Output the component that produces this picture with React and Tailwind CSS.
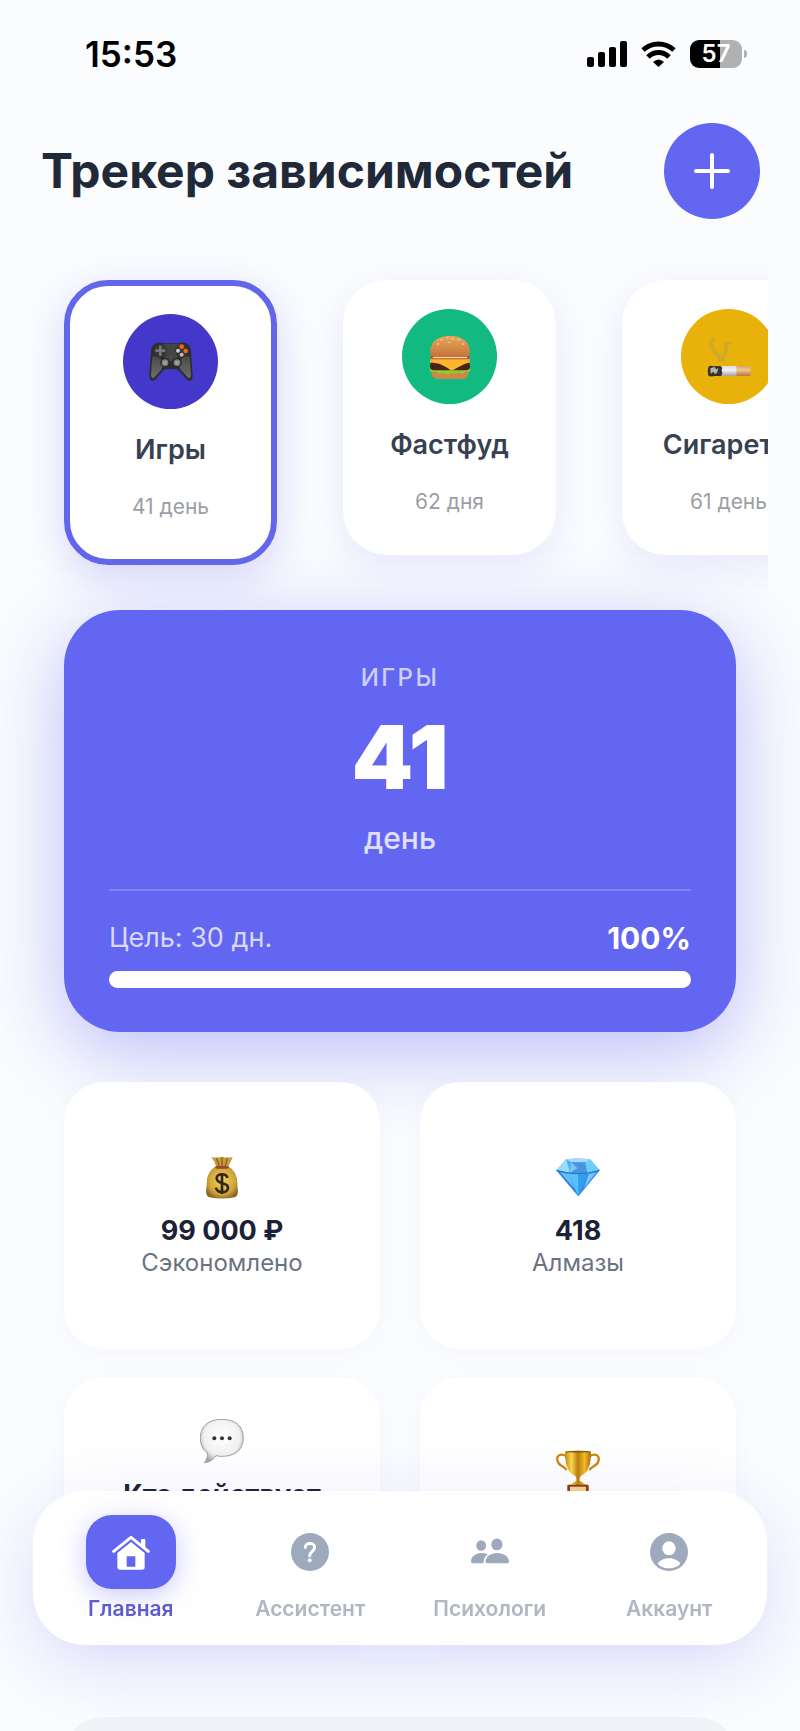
import React from 'react';

const GamepadEmoji = () => (
    <svg viewBox="0 0 132 132" className="h-11 w-11" aria-hidden="true">
        <defs>
            <linearGradient id="padBody" x1="0" y1="0" x2="0" y2="1">
                <stop offset="0" stopColor="#4a4b48" />
                <stop offset="1" stopColor="#6b6e70" />
            </linearGradient>
        </defs>
        <path d="M20 10Q34 5 40 10H92Q98 5 112 10Q124 14 126 34L131 104Q132 122 121 122Q114 122 106 110L90 92Q86 88 80 88H52Q46 88 42 92L26 110Q18 122 11 122Q0 122 1 104L6 34Q8 14 20 10Z" fill="#2d2e2c" />
        <path d="M10 50Q22 44 40 62Q44 84 34 92L16 112Q8 120 6 106Z" fill="url(#padBody)" />
        <path d="M122 50Q110 44 92 62Q88 84 98 92L116 112Q124 120 126 106Z" fill="url(#padBody)" />
        <path d="M42 12H90L84 64H48Z" fill="#454644" />
        <circle cx="34" cy="32" r="20" fill="#353634" />
        <circle cx="98" cy="32" r="20" fill="#353634" />
        <path d="M30 17H38V28H49V36H38V47H30V36H19V28H30Z" fill="#777979" />
        <circle cx="98" cy="20" r="7" fill="#f4641e" />
        <circle cx="110" cy="33" r="7" fill="#f4641e" />
        <circle cx="87" cy="32" r="6" fill="#c9cbcd" />
        <circle cx="98" cy="44" r="6" fill="#b8babc" />
        <circle cx="66" cy="51" r="3" fill="#8f3b22" />
        <circle cx="48" cy="68" r="14" fill="#252624" />
        <circle cx="84" cy="68" r="14" fill="#252624" />
        <circle cx="48" cy="68" r="10" fill="#7d8082" />
        <circle cx="84" cy="68" r="10" fill="#7d8082" />
        <circle cx="48" cy="68" r="6" fill="#9c9fa1" />
        <circle cx="84" cy="68" r="6" fill="#9c9fa1" />
    </svg>
);

const BurgerEmoji = () => (
    <svg viewBox="0 0 132 132" className="h-11 w-11" aria-hidden="true">
        <defs>
            <linearGradient id="bun" x1="0" y1="0" x2="0" y2="1">
                <stop offset="0" stopColor="#eba85c" />
                <stop offset="1" stopColor="#c4733a" />
            </linearGradient>
        </defs>
        <path d="M10 108Q8 132 34 132H98Q124 132 122 108Z" fill="#cf8646" />
        <path d="M4 104Q8 96 20 98H112Q126 96 128 106Q122 116 112 110Q104 120 92 112Q82 120 70 114Q58 122 46 113Q34 120 24 111Q10 114 4 104Z" fill="#93c92f" />
        <rect x="6" y="80" width="120" height="26" rx="12" fill="#4c2415" />
        <path d="M8 72H124L126 82Q108 86 96 94L74 106Q66 106 58 98L34 86L6 82Z" fill="#fbb62c" />
        <rect x="8" y="60" width="116" height="13" rx="6" fill="#d33a22" />
        <path d="M14 68H118" stroke="#f2dfb5" strokeWidth="4" />
        <path d="M6 52Q8 4 66 2Q124 4 126 52Q126 66 108 66H24Q6 66 6 52Z" fill="url(#bun)" />
        <g fill="#f7dca6">
            <ellipse cx="40" cy="15" rx="3" ry="2" />
            <ellipse cx="58" cy="8" rx="3" ry="2" />
            <ellipse cx="74" cy="12" rx="3" ry="2" />
            <ellipse cx="92" cy="14" rx="3" ry="2" />
            <ellipse cx="30" cy="27" rx="3" ry="2" />
            <ellipse cx="106" cy="27" rx="3" ry="2" />
            <ellipse cx="64" cy="22" rx="3" ry="2" />
        </g>
    </svg>
);

const CigaretteEmoji = () => (
    <svg viewBox="0 0 132 132" className="h-11 w-11" aria-hidden="true">
        <defs>
            <linearGradient id="cigPaper" x1="0" y1="0" x2="0" y2="1">
                <stop offset="0" stopColor="#d9dbe2" />
                <stop offset="0.4" stopColor="#f3f3f5" />
                <stop offset="1" stopColor="#a3a2a6" />
            </linearGradient>
            <linearGradient id="cigFilter" x1="0" y1="0" x2="0" y2="1">
                <stop offset="0" stopColor="#dba368" />
                <stop offset="0.4" stopColor="#efc795" />
                <stop offset="1" stopColor="#b17441" />
            </linearGradient>
        </defs>
        <g fill="none" stroke="#c9a637" strokeLinecap="round" opacity="0.8">
            <path d="M38 76C42 60 20 54 14 34C10 22 16 20 18 12" strokeWidth="11" />
            <path d="M48 76C44 58 66 54 56 36C52 26 62 28 68 24" strokeWidth="10" />
        </g>
        <rect x="34" y="93" width="60" height="30" fill="url(#cigPaper)" />
        <path d="M88 93H126Q131 93 131 98V118Q131 123 126 123H88Z" fill="url(#cigFilter)" />
        <path d="M4 96Q10 90 20 94L40 93Q48 96 44 106Q48 118 42 123H22Q12 126 4 122Q0 108 4 96Z" fill="#36322d" />
        <path d="M10 100L22 96L28 103L34 99L31 112L24 118L20 110L11 116Z" fill="#b6b3aa" />
    </svg>
);

const MoneyEmoji = () => (
    <svg viewBox="0 0 132 132" className="h-11 w-11" aria-hidden="true">
        <defs>
            <radialGradient id="sack" cx="0.5" cy="0.45" r="0.6">
                <stop offset="0" stopColor="#f4d65b" />
                <stop offset="0.7" stopColor="#cfa437" />
                <stop offset="1" stopColor="#8a6224" />
            </radialGradient>
        </defs>
        <path d="M34 6Q48 10 66 5Q84 10 98 5Q96 14 82 38H50Q46 22 34 6Z" fill="#c79a3f" />
        <path d="M50 9L58 36M66 7V36M82 9L75 36" stroke="#8a6224" strokeWidth="4" />
        <path d="M48 34H84Q114 50 112 92Q118 122 104 127Q66 134 28 127Q14 122 20 92Q18 50 48 34Z" fill="url(#sack)" />
        <rect x="46" y="33" width="40" height="8" rx="4" fill="#9b4a25" />
        <path d="M82 69C80 54 50 54 50 70C50 90 84 80 84 98C84 116 50 116 48 98M66 54V117" fill="none" stroke="#33261a" strokeWidth="8" />
    </svg>
);

const DiamondEmoji = () => (
    <svg viewBox="0 0 132 132" className="h-11 w-11" aria-hidden="true">
        <path d="M30 13Q66 8 102 13L131 46L67 124L1 46Z" fill="#47b4f5" />
        <path d="M30 13L42 52L1 46Z" fill="#9bdcfb" />
        <path d="M30 13Q66 8 102 13L90 22H46Z" fill="#a9d9f5" />
        <path d="M46 22H90L94 56H38Z" fill="#4796dd" />
        <path d="M46 22L38 56L64 40Z" fill="#7cc5f5" />
        <path d="M102 13L131 46L94 56L88 22Z" fill="#6ccdfc" />
        <path d="M1 46L38 57L67 124Z" fill="#2d7fe0" />
        <path d="M12 52L38 57L56 102Z" fill="#67bdf7" />
        <path d="M38 57H94L67 124Z" fill="#56c1fb" />
        <path d="M66 57H94L67 124Z" fill="#2f9ff0" />
        <path d="M94 57L131 46L67 124Z" fill="#3b86e0" />
        <path d="M98 58L121 52L84 98Z" fill="#6fc9fb" />
        <path d="M1 46Q66 66 131 46" fill="none" stroke="#2471c8" strokeWidth="3" />
    </svg>
);

const BubbleEmoji = () => (
    <svg viewBox="0 0 132 132" className="h-11 w-11" aria-hidden="true">
        <defs>
            <radialGradient id="bubble" cx="0.5" cy="0.42" r="0.6">
                <stop offset="0" stopColor="#ffffff" />
                <stop offset="0.7" stopColor="#f1f1f2" />
                <stop offset="1" stopColor="#a4a4a6" />
            </radialGradient>
        </defs>
        <path d="M66 1C106 1 130 22 130 56C130 92 106 112 66 112C58 112 52 111 48 110C38 124 26 130 13 131C20 122 24 112 22 101C8 92 1 76 1 56C1 22 26 1 66 1Z" fill="url(#bubble)" stroke="#a0a0a2" strokeWidth="3" />
        <circle cx="43" cy="58" r="6" fill="#333336" />
        <circle cx="66" cy="58" r="6" fill="#333336" />
        <circle cx="89" cy="58" r="6" fill="#333336" />
    </svg>
);

const TrophyEmoji = () => (
    <svg viewBox="0 0 132 132" className="h-11 w-11" aria-hidden="true">
        <defs>
            <linearGradient id="cup" x1="0" y1="0" x2="1" y2="0">
                <stop offset="0" stopColor="#c28614" />
                <stop offset="0.25" stopColor="#ffd84a" />
                <stop offset="0.5" stopColor="#b97d10" />
                <stop offset="0.75" stopColor="#f7bd1d" />
                <stop offset="1" stopColor="#a76c0a" />
            </linearGradient>
        </defs>
        <path d="M30 18C12 8 0 18 5 34C9 48 20 46 32 60M102 18C120 8 132 18 127 34C123 48 112 46 100 60" fill="none" stroke="#c8870f" strokeWidth="7" />
        <path d="M27 5Q66 0 105 5Q106 60 78 76Q70 80 71 92Q82 98 92 106H40Q50 98 61 92Q62 80 54 76Q26 60 27 5Z" fill="url(#cup)" />
        <ellipse cx="66" cy="5" rx="38" ry="3" fill="#8f5f0c" />
        <rect x="34" y="104" width="64" height="28" rx="3" fill="#8f3511" />
        <rect x="42" y="110" width="48" height="20" fill="#f4d58a" />
    </svg>
);

const HomeIcon = () => (
    <svg viewBox="0 0 114 114" className="h-[38px] w-[38px]" aria-hidden="true">
        <path d="M5 55L57 13L109 55" fill="none" stroke="currentColor" strokeWidth="9" strokeLinecap="round" strokeLinejoin="round" />
        <path d="M87 36V21Q87 18 90 18H97Q100 18 100 21V46Z" fill="currentColor" />
        <path fillRule="evenodd" d="M16 60L57 27L98 60V102Q98 110 90 110H24Q16 110 16 102ZM44 70V101H70V70Z" fill="currentColor" />
    </svg>
);

const QuestionIcon = () => (
    <svg viewBox="0 0 114 114" className="h-[38px] w-[38px]" aria-hidden="true">
        <circle cx="57" cy="57" r="57" fill="currentColor" />
        <path d="M43 43C43 28 71 28 71 43C71 54 56 56 56 68" fill="none" stroke="#fff" strokeWidth="9" strokeLinecap="round" />
        <circle cx="56" cy="82" r="6" fill="#fff" />
    </svg>
);

const PeopleIcon = () => (
    <svg viewBox="0 0 116 116" className="h-[38px] w-[38px]" fill="currentColor" aria-hidden="true">
        <ellipse cx="31" cy="38" rx="15" ry="16" />
        <ellipse cx="79" cy="35" rx="17" ry="18" />
        <path d="M44 88C44 72 60 61 80 61S116 72 116 88Q116 92 112 92H48Q44 92 44 88Z" />
        <path d="M0 88C0 72 14 61 32 61Q43 61 51 65Q38 75 38 92H4Q0 92 0 88Z" />
    </svg>
);

const AccountIcon = () => (
    <svg viewBox="0 0 114 114" className="h-[38px] w-[38px]" aria-hidden="true">
        <circle cx="57" cy="57" r="57" fill="currentColor" />
        <ellipse cx="57" cy="46" rx="20" ry="21" fill="#fff" />
        <path d="M23 92C31 80 44 76 57 76S83 80 91 92C82 102 70 106 57 106S32 102 23 92Z" fill="#fff" />
    </svg>
);

const habits = [
    { name: 'Игры', days: '41 день', color: 'bg-[#4338ca]', icon: <GamepadEmoji />, active: true },
    { name: 'Фастфуд', days: '62 дня', color: 'bg-[#12b981]', icon: <BurgerEmoji /> },
    { name: 'Сигареты', days: '61 день', color: 'bg-[#e9b20a]', icon: <CigaretteEmoji /> },
];

const tabs = [
    { name: 'Главная', icon: <HomeIcon />, active: true },
    { name: 'Ассистент', icon: <QuestionIcon /> },
    { name: 'Психологи', icon: <PeopleIcon /> },
    { name: 'Аккаунт', icon: <AccountIcon /> },
];

const StatusBar = () => (
    <div className="flex h-[107px] items-center justify-between pl-[85px] pr-[53px] text-black">
        <span className="text-[35px] font-semibold leading-10">15:53</span>
        <div className="flex items-center gap-[14px]">
            <svg viewBox="0 0 40 26" className="h-[26px] w-10" aria-hidden="true">
                <rect x="0" y="16" width="7" height="10" rx="2" />
                <rect x="11" y="11" width="7" height="15" rx="2" />
                <rect x="22" y="6" width="7" height="20" rx="2" />
                <rect x="33" y="0" width="7" height="26" rx="2" />
            </svg>
            <svg viewBox="0 0 35 26" className="h-[26px] w-[35px]" aria-hidden="true">
                <path d="M2 9C11 1 24 1 33 9" fill="none" stroke="#000" strokeWidth="5" />
                <path d="M7 16C13 10 22 10 28 16" fill="none" stroke="#000" strokeWidth="5" />
                <path d="M12 21Q17.500 16 23 21L17.500 26Z" />
            </svg>
            <div className="flex items-center gap-[2px]">
                <div className="flex h-7 w-[52px] items-center justify-center rounded-[9px] bg-linear-to-r from-black from-57% to-[#b0b1b3] to-57%">
                    <span className="text-2xl font-semibold leading-7 text-white">57</span>
                </div>
                <div className="h-2 w-[3px] rounded-r-full bg-[#b0b1b3]" />
            </div>
        </div>
    </div>
);

const HabitCard = ({ habit }) => (
    <button
        type="button"
        className={
            habit.active
                ? 'flex w-[213px] shrink-0 flex-col items-center rounded-[44px] border-[6px] border-[#6366ea] bg-white pt-7 pb-10 shadow-[0_12px_40px_rgba(99,102,241,0.24)]'
                : 'flex w-[213px] shrink-0 flex-col items-center rounded-[44px] bg-white pt-[29px] pb-[41px] shadow-[0_12px_36px_rgba(99,102,241,0.12)]'
        }
    >
        <span className={`flex h-[95px] w-[95px] items-center justify-center rounded-full ${habit.color}`}>{habit.icon}</span>
        <span className="mt-[25px] text-[27px] font-semibold leading-8 text-[#374151]">{habit.name}</span>
        <span className="mt-[29px] text-[21px] leading-6 text-[#9b9ea5]">{habit.days}</span>
    </button>
);

const StatCard = ({ icon, value, label, pad = 'pt-[73px]' }) => (
    <div className={`flex h-[267px] flex-col items-center rounded-[40px] bg-white text-center shadow-[0_4px_24px_rgba(99,102,241,0.04)] ${pad}`}>
        {icon}
        {value && <p className="mt-4 text-[27px] font-bold leading-8 text-[#1b2136]">{value}</p>}
        {label && <p className="text-2xl leading-8 text-[#6b7280]">{label}</p>}
    </div>
);

const NavBar = () => (
    <nav className="fixed inset-x-[33px] bottom-[86px] flex rounded-[52px] bg-white px-2 pt-6 pb-6 shadow-[0_20px_70px_rgba(99,102,241,0.2)]">
        {tabs.map((tab) => (
            <a
                key={tab.name}
                href="#"
                className={`flex flex-1 flex-col items-center gap-2 text-[21px] font-semibold leading-6 ${tab.active ? 'text-[#5f5ccb]' : 'text-[#b1b6c2]'}`}
            >
                <span
                    className={
                        tab.active
                            ? 'flex h-[74px] w-[90px] items-center justify-center rounded-[26px] bg-[#6366f1] text-white shadow-[0_6px_26px_rgba(99,102,241,0.35)]'
                            : 'flex h-[74px] w-[90px] items-center justify-center text-[#9fa9bc]'
                    }
                >
                    {tab.icon}
                </span>
                {tab.name}
            </a>
        ))}
    </nav>
);

const App = () => {
    return (
        <div className="h-screen overflow-hidden bg-[#fafcfe] font-[Inter,'Liberation_Sans',sans-serif]">
            <StatusBar />

            <header className="flex items-center justify-between pt-4 pr-10 pl-[41px]">
                <h1 className="text-5xl font-bold text-[#1f2937]">Трекер зависимостей</h1>
                <button type="button" aria-label="Добавить" className="flex h-24 w-24 items-center justify-center rounded-full bg-[#6366f1]">
                    <svg viewBox="0 0 36 36" className="h-9 w-9" aria-hidden="true">
                        <path d="M18 2V34M2 18H34" stroke="#fff" strokeWidth="4" strokeLinecap="round" />
                    </svg>
                </button>
            </header>

            <main>
                <div className="mx-8 mt-[21px] flex items-start gap-[66px] overflow-x-auto pt-10 pb-[45px] pl-8 [scrollbar-width:none]">
                    {habits.map((habit) => (
                        <HabitCard key={habit.name} habit={habit} />
                    ))}
                </div>

                <div className="px-16">
                    <section className="flex flex-col rounded-[56px] bg-[#6366f1] px-[45px] pt-[52px] pb-11 text-center shadow-[0_20px_80px_rgba(99,102,241,0.42)]">
                        <p className="text-2xl font-medium uppercase leading-8 tracking-widest text-white/70">Игры</p>
                        <p className="mt-[19px] text-[88px] font-black leading-[88px] text-white">41</p>
                        <p className="mt-[17px] text-[30px] font-medium leading-10 text-white/80">день</p>
                        <div className="mt-[31px] h-[2px] bg-white/20" />
                        <div className="mt-[27px] flex items-center justify-between leading-10">
                            <span className="text-[27px] text-white/75">Цель: 30 дн.</span>
                            <span className="text-[30px] font-bold text-white">100%</span>
                        </div>
                        <div className="mt-[13px] h-[17px] rounded-full bg-white" />
                    </section>

                    <section className="relative mt-[50px] grid grid-cols-2 gap-x-10 gap-y-7">
                        <StatCard icon={<MoneyEmoji />} value="99 000 ₽" label="Сэкономлено" />
                        <StatCard icon={<DiamondEmoji />} value="418" label="Алмазы" />
                        <StatCard icon={<BubbleEmoji />} value="Кто действует" pad="pt-[42px]" />
                        <StatCard icon={<TrophyEmoji />} />
                    </section>

                    <section className="mt-[73px] h-40 rounded-[40px] bg-[#f1f3f7]" />
                </div>
            </main>

            <NavBar />
        </div>
    );
};

export default App;
